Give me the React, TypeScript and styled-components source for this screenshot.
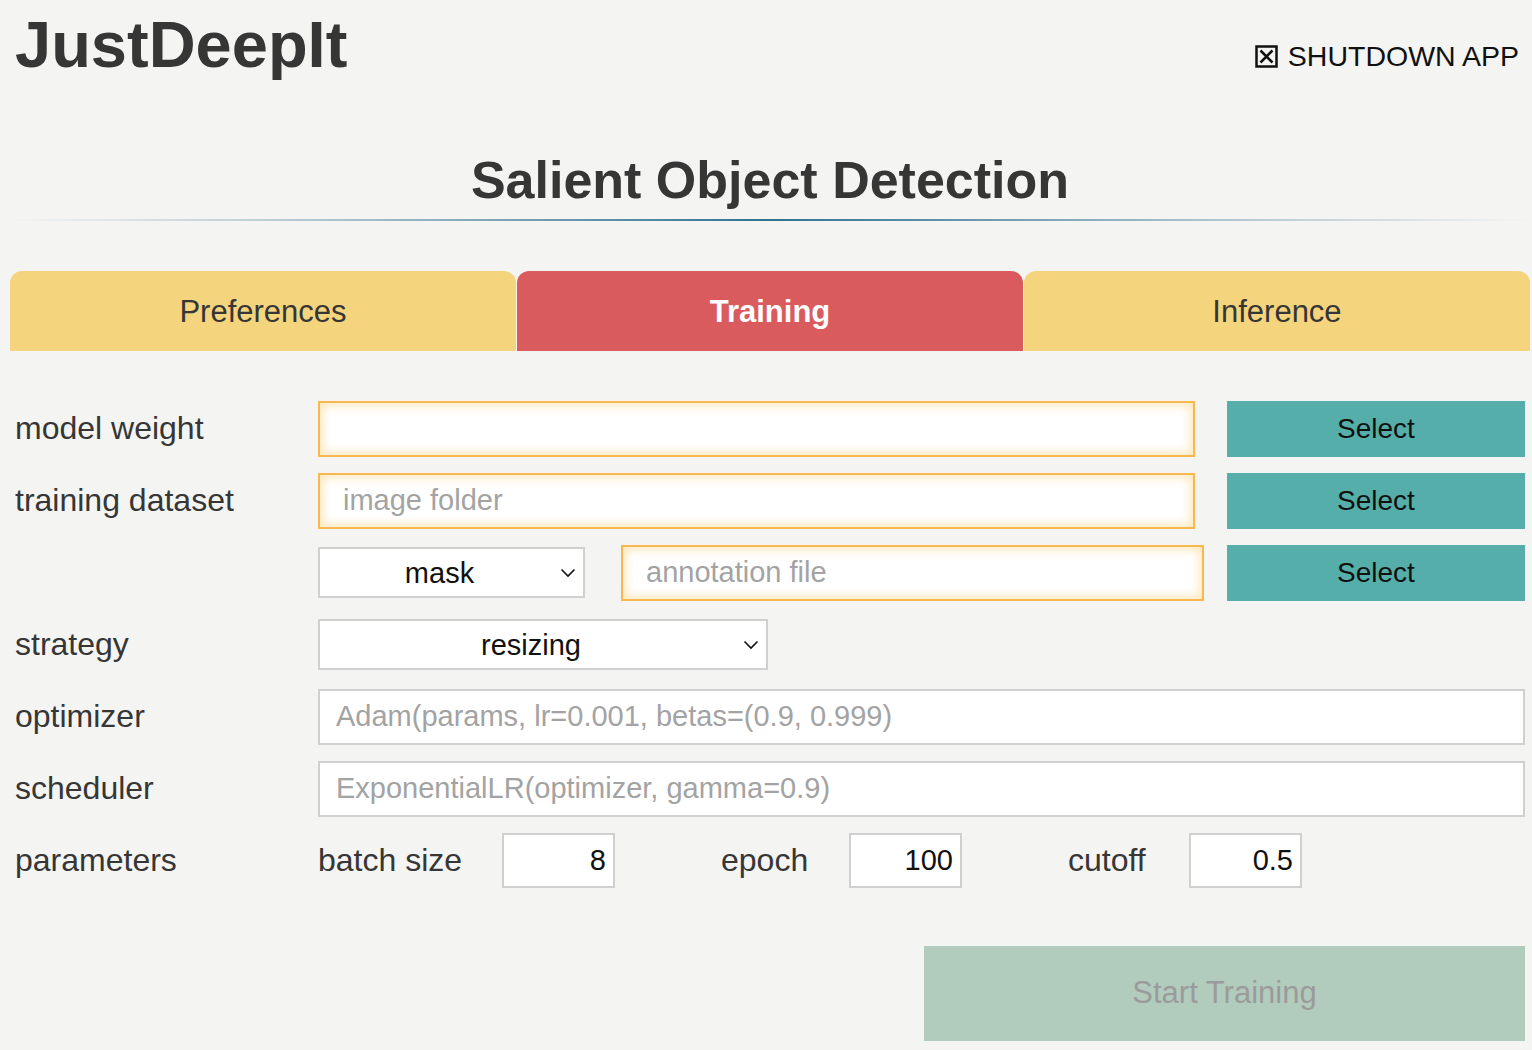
import styled, { createGlobalStyle } from "styled-components";

const GlobalStyle = createGlobalStyle`
  body {
    margin: 0;
    background: #f4f4f2;
    font-family: "Liberation Sans", Arial, Helvetica, sans-serif;
    color: #363636;
  }
`;

const Chevron = () => (
  <ChevronIcon width="16" height="10" viewBox="0 0 16 10">
    <path d="M1.5 1.5 L8 8 L14.5 1.5" fill="none" stroke="#111" strokeWidth="1.6" />
  </ChevronIcon>
);

const BoxX = () => (
  <svg width="23" height="23" viewBox="0 0 23 23">
    <rect x="1.5" y="1.5" width="20" height="20" fill="none" stroke="#111" strokeWidth="2.5" />
    <path d="M5.5 5.5 L17.5 17.5 M17.5 5.5 L5.5 17.5" stroke="#111" strokeWidth="2.5" />
  </svg>
);

const App = () => {
  return (
    <Page>
      <GlobalStyle />
      <Header>
        <Logo>JustDeepIt</Logo>
        <Shutdown>
          <BoxX />
          SHUTDOWN APP
        </Shutdown>
      </Header>
      <Title>Salient Object Detection</Title>
      <Divider />
      <Tabs>
        <Tab>Preferences</Tab>
        <Tab $active>Training</Tab>
        <Tab>Inference</Tab>
      </Tabs>
      <Form>
        <Row>
          <Label>model weight</Label>
          <FileField>
            <PathInput />
            <SelectButton>Select</SelectButton>
          </FileField>
        </Row>
        <Row>
          <Label>training dataset</Label>
          <FileField>
            <PathInput placeholder="image folder" />
            <SelectButton>Select</SelectButton>
          </FileField>
        </Row>
        <Row>
          <Label />
          <AnnotationField>
            <SelectWrap $width={267}>
              <Dropdown defaultValue="mask">
                <option value="mask">mask</option>
                <option value="coco">COCO</option>
              </Dropdown>
              <Chevron />
            </SelectWrap>
            <AnnotationInput placeholder="annotation file" />
            <SelectButton>Select</SelectButton>
          </AnnotationField>
        </Row>
        <Row>
          <Label>strategy</Label>
          <SelectWrap $width={450}>
            <Dropdown defaultValue="resizing">
              <option value="resizing">resizing</option>
              <option value="randomcrop">random crop</option>
            </Dropdown>
            <Chevron />
          </SelectWrap>
        </Row>
        <Row>
          <Label>optimizer</Label>
          <TextInput placeholder="Adam(params, lr=0.001, betas=(0.9, 0.999)" />
        </Row>
        <Row>
          <Label>scheduler</Label>
          <TextInput placeholder="ExponentialLR(optimizer, gamma=0.9)" />
        </Row>
        <Row>
          <Label>parameters</Label>
          <Params>
            <ParamGroup $labelWidth={184}>
              <ParamLabel>batch size</ParamLabel>
              <NumberInput defaultValue="8" />
            </ParamGroup>
            <ParamGroup $labelWidth={128}>
              <ParamLabel>epoch</ParamLabel>
              <NumberInput defaultValue="100" />
            </ParamGroup>
            <ParamGroup $labelWidth={121}>
              <ParamLabel>cutoff</ParamLabel>
              <NumberInput defaultValue="0.5" />
            </ParamGroup>
          </Params>
        </Row>
        <StartButton disabled>Start Training</StartButton>
      </Form>
    </Page>
  );
};

const Page = styled.div`
  display: flex;
  flex-direction: column;
  padding: 0 2px 0 10px;
  min-height: 1050px;
  box-sizing: border-box;
`;

const Header = styled.div`
  display: flex;
  justify-content: space-between;
  align-items: flex-start;
  padding: 8px 11px 0 5px;
`;

const Logo = styled.h1`
  margin: 0;
  font-size: 65px;
  line-height: 1.15;
  font-weight: bold;
  color: #363636;
`;

const Shutdown = styled.div`
  display: flex;
  align-items: center;
  gap: 10px;
  margin-top: 32px;
  font-size: 28.5px;
  line-height: 1.15;
  color: #111;
`;

const Title = styled.h2`
  margin: 68px 0 0;
  text-align: center;
  font-size: 52px;
  line-height: 1.15;
  font-weight: bold;
  color: #363636;
`;

const Divider = styled.div`
  height: 2px;
  margin: 8px 2px 0 0;
  background: linear-gradient(
    to right,
    rgba(47, 113, 147, 0) 0%,
    rgba(47, 113, 147, 0.35) 20%,
    #2f7193 50%,
    rgba(47, 113, 147, 0.35) 80%,
    rgba(47, 113, 147, 0) 100%
  );
`;

const Tabs = styled.div`
  display: grid;
  grid-template-columns: 1fr 1fr 1fr;
  column-gap: 1px;
  margin-top: 50px;
`;

const Tab = styled.div<{ $active?: boolean }>`
  height: 80px;
  display: flex;
  align-items: center;
  justify-content: center;
  padding-top: 2px;
  box-sizing: border-box;
  border-radius: 12px 12px 0 0;
  font-size: 31px;
  font-weight: ${(p) => (p.$active ? "bold" : "normal")};
  background: ${(p) => (p.$active ? "#d95b5e" : "#f5d47e")};
  color: ${(p) => (p.$active ? "#fff" : "#363636")};
`;

const Form = styled.div`
  display: flex;
  flex-direction: column;
  gap: 16px;
  margin-top: 50px;
  padding: 0 5px;
`;

const Row = styled.div`
  display: grid;
  grid-template-columns: 303px 1fr;
  align-items: center;
  height: 56px;
`;

const Label = styled.div`
  font-size: 32px;
  color: #363636;
`;

const FileField = styled.div`
  display: grid;
  grid-template-columns: 1fr 298px;
  column-gap: 32px;
  height: 100%;
`;

const AnnotationField = styled.div`
  display: grid;
  grid-template-columns: 267px 1fr 298px;
  align-items: center;
  height: 100%;
`;

const inputBase = `
  box-sizing: border-box;
  height: 100%;
  width: 100%;
  background: #fff;
  font-family: "Liberation Sans", Arial, Helvetica, sans-serif;
  font-size: 29px;
  color: #111;
  outline: none;
  &::placeholder {
    color: #a3a3a3;
  }
`;

const PathInput = styled.input`
  ${inputBase}
  border: 2px solid #f6b94f;
  box-shadow: inset 0 0 10px 3px rgba(252, 205, 110, 0.45);
  padding: 0 23px;
`;

const AnnotationInput = styled(PathInput)`
  margin: 0 23px 0 36px;
  width: auto;
  min-width: 0;
`;

const TextInput = styled.input`
  ${inputBase}
  border: 2px solid #d0d0d0;
  padding: 0 16px;
`;

const SelectButton = styled.button`
  height: 100%;
  border: none;
  background: #55aea9;
  color: #111;
  font-family: "Liberation Sans", Arial, Helvetica, sans-serif;
  font-size: 28px;
  cursor: pointer;
`;

const SelectWrap = styled.div<{ $width: number }>`
  position: relative;
  width: ${(p) => p.$width}px;
  height: 51px;
`;

const Dropdown = styled.select`
  box-sizing: border-box;
  appearance: none;
  width: 100%;
  height: 100%;
  background: #fff;
  border: 2px solid #d0d0d0;
  border-radius: 0;
  padding: 0 24px 0 0;
  text-align: center;
  text-align-last: center;
  font-family: "Liberation Sans", Arial, Helvetica, sans-serif;
  font-size: 29px;
  color: #111;
  outline: none;
`;

const ChevronIcon = styled.svg`
  position: absolute;
  right: 9px;
  top: 21px;
  pointer-events: none;
`;

const Params = styled.div`
  display: flex;
  align-items: center;
  gap: 106px;
  height: 100%;
`;

const ParamGroup = styled.div<{ $labelWidth: number }>`
  display: grid;
  grid-template-columns: ${(p) => p.$labelWidth}px 113px;
  align-items: center;
  height: 100%;
`;

const ParamLabel = styled.div`
  font-size: 32px;
  color: #363636;
`;

const NumberInput = styled.input`
  ${inputBase}
  height: 55px;
  border: 2px solid #d0d0d0;
  padding: 0 7px;
  text-align: right;
`;

const StartButton = styled.button`
  align-self: flex-end;
  width: 601px;
  height: 95px;
  margin-top: 41px;
  border: none;
  background: #b1cbbd;
  color: #9b9b9b;
  font-family: "Liberation Sans", Arial, Helvetica, sans-serif;
  font-size: 31px;
`;

export default App;
